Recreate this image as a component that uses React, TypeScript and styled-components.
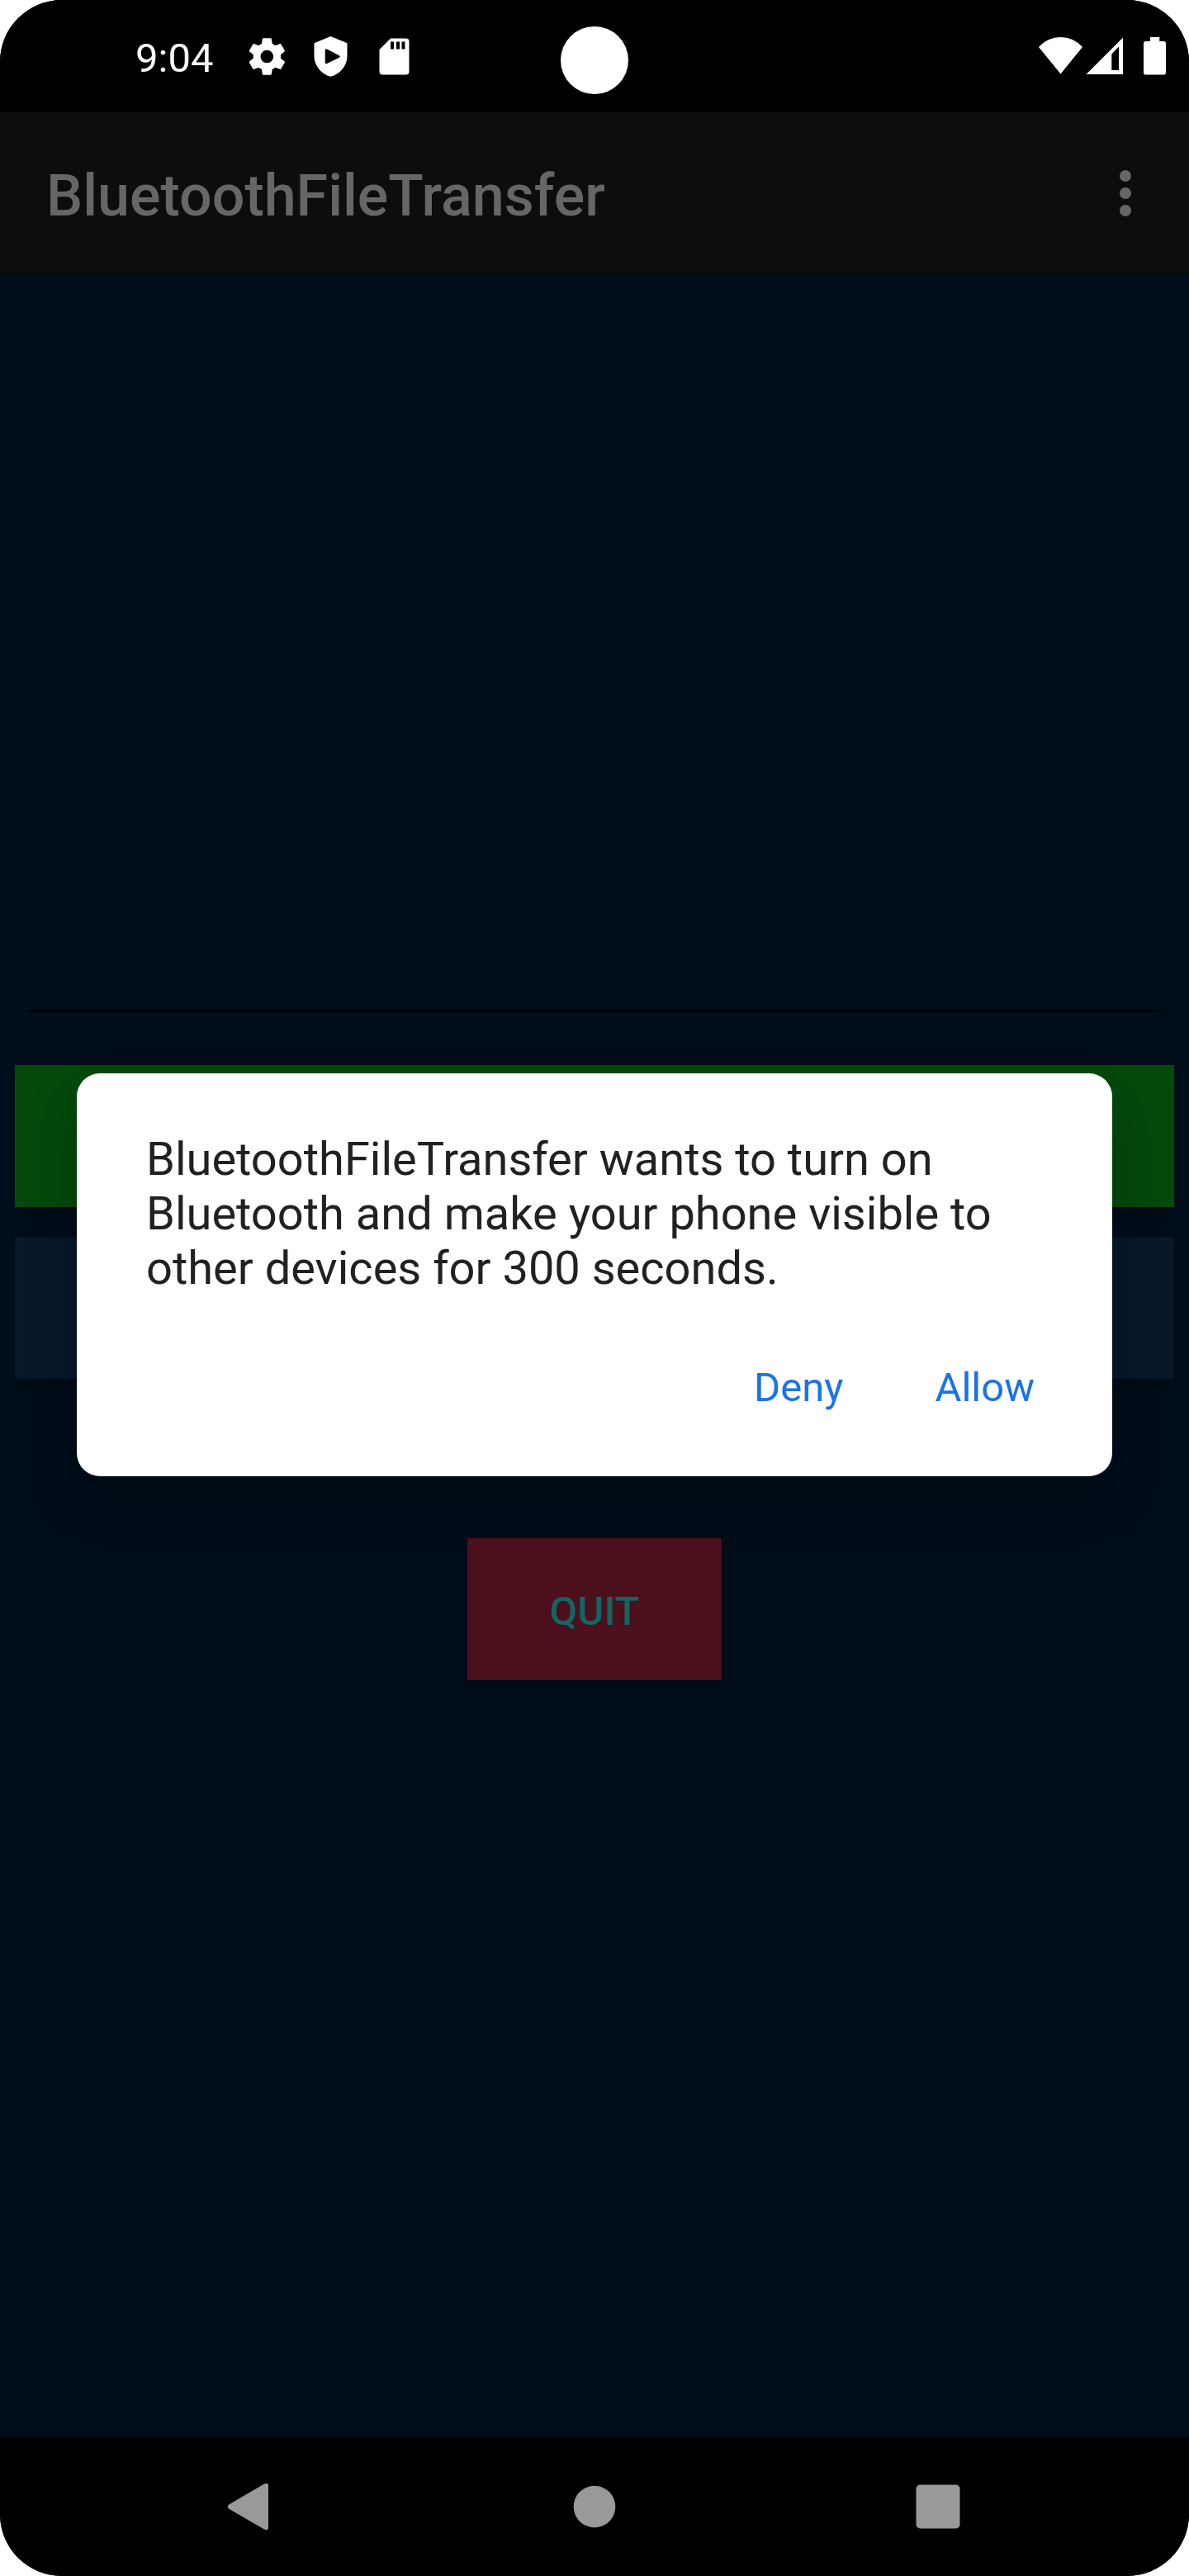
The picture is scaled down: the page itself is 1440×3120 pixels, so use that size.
import React from "react";
import styled, { createGlobalStyle } from "styled-components";

const GlobalStyle = createGlobalStyle`
  body { margin: 0; background: #fff; }
  * { box-sizing: border-box; }
`;

const Screen = styled.div`
  position: relative;
  display: flex;
  flex-direction: column;
  width: 1440px;
  height: 3120px;
  overflow: hidden;
  border-radius: 75px;
  background: #000d1a;
  font-family: Roboto, sans-serif;
`;

const StatusBar = styled.header`
  display: flex;
  align-items: center;
  justify-content: space-between;
  height: 136px;
  padding: 0 28px 0 164px;
  background: #000;
  color: #fff;
`;

const StatusGroup = styled.div`
  display: flex;
  align-items: center;
`;

const Clock = styled.span`
  width: 126px;
  padding-top: 5px;
  font-size: 49px;
  line-height: 58px;
`;

const Camera = styled.div`
  position: absolute;
  top: 32px;
  left: 679px;
  width: 82px;
  height: 82px;
  border-radius: 50%;
  background: #fff;
`;

const AppBar = styled.div`
  display: flex;
  align-items: center;
  justify-content: space-between;
  height: 196px;
  padding: 0 70px 0 56px;
  background: #0d0d0d;
`;

const Title = styled.h1`
  margin: 0;
  padding-top: 5px;
  color: #666;
  font-size: 70px;
  font-weight: 500;
  line-height: 82px;
`;

const MenuDots = styled.div`
  display: flex;
  flex-direction: column;
  gap: 7px;
`;

const Dot = styled.i`
  width: 14px;
  height: 14px;
  border-radius: 50%;
  background: #666;
`;

const Content = styled.main`
  display: flex;
  flex: 1;
  flex-direction: column;
  align-items: center;
  padding: 0 18px;
`;

const InputArea = styled.div`
  width: 1375px;
  height: 894px;
  margin-bottom: 64px;
  border-bottom: 3px solid #000409;
`;

const ActionButton = styled.div<{ $color: string; $narrow?: boolean; $gap: number }>`
  display: flex;
  align-items: center;
  justify-content: center;
  width: ${(p) => (p.$narrow ? "308px" : "100%")};
  height: 172px;
  margin-bottom: ${(p) => p.$gap}px;
  padding-top: 4px;
  background: ${(p) => p.$color};
  box-shadow: 0 5px 9px rgba(0, 0, 0, 0.18);
  color: #126663;
  font-size: 49px;
  font-weight: 500;
`;

const NavBar = styled.nav`
  display: flex;
  align-items: center;
  justify-content: space-between;
  height: 168px;
  padding: 0 277px 0 273px;
  background: #000;
`;

const Dialog = styled.section`
  position: absolute;
  top: 1300px;
  left: 93px;
  display: flex;
  flex-direction: column;
  justify-content: space-between;
  width: 1254px;
  height: 488px;
  padding: 71px 94px 78px 84px;
  border-radius: 28px;
  background: #fff;
  box-shadow: 0 28px 60px rgba(0, 0, 0, 0.26);
`;

const Message = styled.p`
  margin: 0;
  color: #212121;
  font-size: 56px;
  line-height: 66px;
  white-space: nowrap;
`;

const DialogActions = styled.div`
  display: flex;
  justify-content: flex-end;
  gap: 111px;
`;

const TextButton = styled.span`
  color: #1a73e8;
  font-size: 49px;
  line-height: 58px;
`;

const StatusIcons = () => (
  <svg width="220" height="80" viewBox="290 28 220 80" fill="#fff">
    <g transform="translate(296.7 41.8) scale(2.22)">
      <path d="M19.43 12.98c.04-.32.07-.64.07-.98s-.03-.66-.07-.98l2.11-1.65c.19-.15.24-.42.12-.64l-2-3.46c-.12-.22-.39-.3-.61-.22l-2.49 1c-.52-.4-1.08-.73-1.69-.98l-.38-2.65C14.46 2.18 14.25 2 14 2h-4c-.25 0-.46.18-.49.42l-.38 2.65c-.61.25-1.17.59-1.69.98l-2.49-1c-.23-.09-.49 0-.61.22l-2 3.46c-.13.22-.07.49.12.64l2.11 1.65c-.04.32-.07.65-.07.98s.03.66.07.98l-2.11 1.65c-.19.15-.24.42-.12.64l2 3.46c.12.22.39.3.61.22l2.49-1c.52.4 1.08.73 1.69.98l.38 2.65c.03.24.24.42.49.42h4c.25 0 .46-.18.49-.42l.38-2.65c.61-.25 1.17-.59 1.69-.98l2.49 1c.23.09.49 0 .61-.22l2-3.46c.12-.22.07-.49-.12-.64l-2.11-1.65zM12 15.5c-1.93 0-3.5-1.57-3.5-3.5s1.57-3.5 3.5-3.5 3.5 1.57 3.5 3.5-1.57 3.5-3.5 3.5z" />
    </g>
    <path fillRule="evenodd" d="M400.500 44l20 8.300v16.200c0 10.500-8.500 21.500-20 24.300-11.500-2.800-20-13.800-20-24.300V52.300zM393.700 61v14.500q0 2.500 2.300 1.500l14.800-7.300q2-1.200 0-2.400L396 59.500q-2.300-1-2.300 1.500z" />
    <path fillRule="evenodd" d="M473 46.500h18.500q4 0 4 4v36q0 4-4 4h-28q-4 0-4-4V60zM473 50.500v9h4v-9zM480 50.500v9h4v-9zM486.500 50.500v9h4v-9z" />
  </svg>
);

const SignalIcons = () => (
  <svg width="160" height="52" viewBox="1252 42 160 52" fill="#fff">
    <path d="M1258 57Q1269 45 1284.500 45T1311 57L1284.500 89.500z" />
    <path fillRule="evenodd" d="M1315.500 90L1360 45.500V90zM1346.300 85H1355V56.500L1346.300 65.500z" />
    <path d="M1393 45h11.300v5h5q2.700 0 2.700 2.700v35q0 2.800-2.700 2.800h-21.500q-2.800 0-2.800-2.800v-35q0-2.700 2.800-2.700h5.200z" />
  </svg>
);

export default function App() {
  return (
    <>
      <GlobalStyle />
      <Screen>
        <StatusBar>
          <StatusGroup>
            <Clock>9:04</Clock>
            <StatusIcons />
          </StatusGroup>
          <SignalIcons />
        </StatusBar>
        <Camera />
        <AppBar>
          <Title>BluetoothFileTransfer</Title>
          <MenuDots>
            <Dot />
            <Dot />
            <Dot />
          </MenuDots>
        </AppBar>
        <Content>
          <InputArea />
          <ActionButton $color="#044a0b" $gap={36} />
          <ActionButton $color="#061829" $gap={193} />
          <ActionButton $color="#4b101b" $gap={0} $narrow>
            QUIT
          </ActionButton>
        </Content>
        <NavBar>
          <svg width="58" height="60" viewBox="273 3006 58 60" fill="#999">
            <path d="M277.500 3033.200L320 3008.500Q325 3006.200 325 3011V3061Q325 3065.800 320 3063.500L277.500 3038.800Q274.200 3036 277.500 3033.200z" />
          </svg>
          <svg width="52" height="52" viewBox="0 0 52 52" fill="#999">
            <circle cx="26" cy="26" r="25.300" />
          </svg>
          <svg width="54" height="54" viewBox="0 0 54 54" fill="#999">
            <rect x=".5" y=".5" width="53" height="53" rx="5" />
          </svg>
        </NavBar>
        <Dialog>
          <Message>
            BluetoothFileTransfer wants to turn on
            <br />
            Bluetooth and make your phone visible to
            <br />
            other devices for 300 seconds.
          </Message>
          <DialogActions>
            <TextButton>Deny</TextButton>
            <TextButton>Allow</TextButton>
          </DialogActions>
        </Dialog>
      </Screen>
    </>
  );
}
